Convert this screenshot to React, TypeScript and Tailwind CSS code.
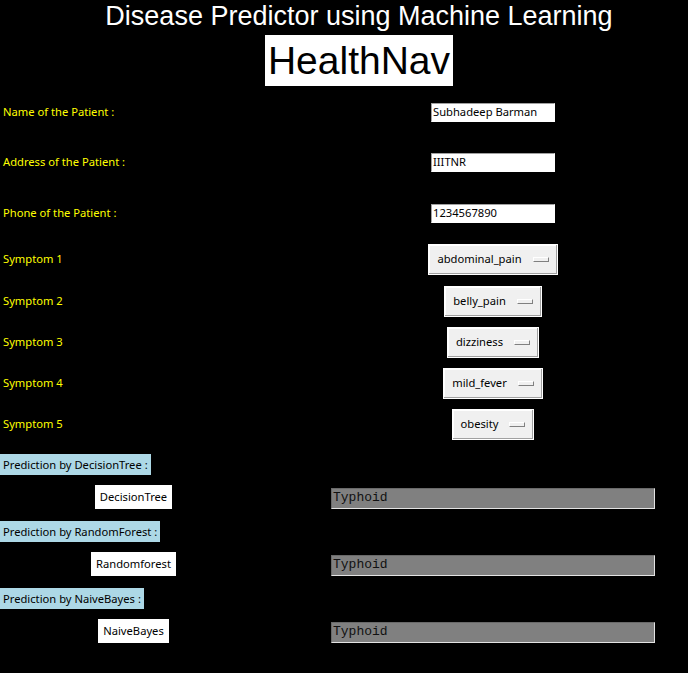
const ui = "font-['Noto_Sans','Open_Sans',sans-serif] text-[11.2px]"

const patientRows = [
  { label: 'Name of the Patient :', value: 'Subhadeep Barman', h: 'h-[50px]' },
  { label: 'Address of the Patient :', value: 'IIITNR', h: 'h-[51px]' },
  { label: 'Phone of the Patient :', value: '1234567890', h: 'h-[50px]' },
]

const symptoms = [
  { label: 'Symptom 1', value: 'abdominal_pain', h: 'h-[43px]' },
  { label: 'Symptom 2', value: 'belly_pain', h: 'h-[40px]' },
  { label: 'Symptom 3', value: 'dizziness', h: 'h-[42px]' },
  { label: 'Symptom 4', value: 'mild_fever', h: 'h-[40px]' },
  { label: 'Symptom 5', value: 'obesity', h: 'h-[42px]' },
]

const predictions = [
  { title: 'Prediction by DecisionTree :', button: 'DecisionTree', result: 'Typhoid' },
  { title: 'Prediction by RandomForest :', button: 'Randomforest', result: 'Typhoid' },
  { title: 'Prediction by NaiveBayes :', button: 'NaiveBayes', result: 'Typhoid' },
]

function OptionMenu({ value }: { value: string }) {
  return (
    <div className="flex h-[31px] items-center border border-white bg-[#f0f0f0] pl-[8px] pr-[8px] shadow-[inset_-1px_-1px_0_#a0a0a0,inset_1px_1px_0_#ffffff]">
      <span className="text-black">{value}</span>
      <span className="ml-[11px] h-[5px] w-[16px] border border-t-white border-l-white border-r-[#808080] border-b-[#808080] bg-[#f0f0f0]" />
    </div>
  )
}

export default function App() {
  return (
    <div className={`min-h-[673px] w-[688px] overflow-hidden bg-black ${ui}`}>
      <div className="flex flex-col items-center pl-[30px]">
        <h1 className="font-['Liberation_Sans',Arial,sans-serif] text-[27px] leading-[32px] text-white">
          Disease Predictor using Machine Learning
        </h1>
        <div className="mt-[3px] flex h-[51px] w-[188px] items-center justify-center bg-white font-['Liberation_Sans',Arial,sans-serif] text-[39px] leading-[51px] text-black">
          HealthNav
        </div>
      </div>

      <div className="h-[1px]" />

      {patientRows.map((r) => (
        <div key={r.label} className={`flex items-center ${r.h}`}>
          <div className="w-[426px] pl-[3px] text-[#ffff00]">{r.label}</div>
          <div className="flex w-[134px] justify-center">
            <div className="flex h-[19px] w-[124px] items-center border border-t-[#a0a0a0] border-l-[#a0a0a0] border-r-white border-b-white bg-white pl-[1px] text-black">
              {r.value}
            </div>
          </div>
        </div>
      ))}

      {symptoms.map((s) => (
        <div key={s.label} className={`flex items-center ${s.h}`}>
          <div className="w-[426px] pl-[3px] text-[#ffff00]">{s.label}</div>
          <div className="flex w-[134px] justify-center">
            <OptionMenu value={s.value} />
          </div>
        </div>
      ))}

      <div className="h-[9px]" />

      {predictions.map((p, i) => (
        <div key={p.title} className={i > 0 ? 'mt-[2px]' : ''}>
          <div className="inline-block h-[21px] bg-[#add8e6] px-[3px] leading-[21px] text-black">{p.title}</div>
          <div className="flex h-[44px] items-center">
            <div className="flex w-[267px] justify-center">
              <div className="h-[24px] bg-white px-[5px] leading-[24px] text-black">{p.button}</div>
            </div>
            <div className="ml-[64px] mt-[2px] flex h-[21px] w-[324px] items-center border border-t-[#696969] border-l-[#696969] border-r-[#e3e3e3] border-b-[#e3e3e3] bg-[#808080] pl-[1px] font-['Liberation_Mono','Courier_New',monospace] text-[13px] text-[#111]">
              {p.result}
            </div>
          </div>
        </div>
      ))}
    </div>
  )
}
